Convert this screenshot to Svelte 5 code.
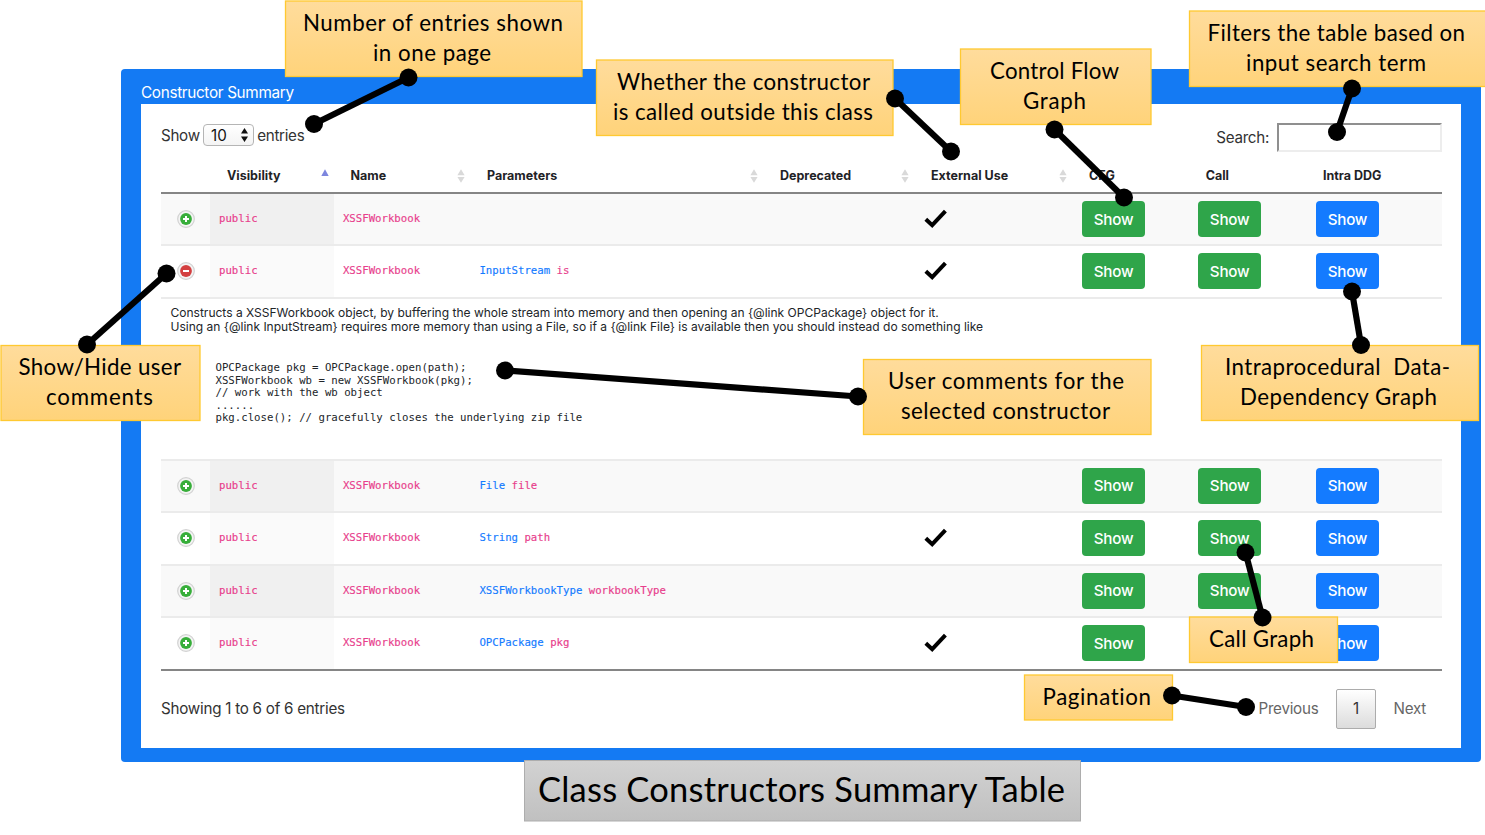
<script>
  const rows = [
    { type: '', arg: '', external: true, call: true },
    { type: 'InputStream', arg: 'is', external: true, call: true, open: true },
    { type: 'File', arg: 'file', external: false, call: true },
    { type: 'String', arg: 'path', external: true, call: true },
    { type: 'XSSFWorkbookType', arg: 'workbookType', external: false, call: true },
    { type: 'OPCPackage', arg: 'pkg', external: true, call: false }
  ];

  const headers = [
    { label: '' },
    { label: 'Visibility', sort: 'asc' },
    { label: 'Name', sort: 'both' },
    { label: 'Parameters', sort: 'both' },
    { label: 'Deprecated', sort: 'both' },
    { label: 'External Use', sort: 'both' },
    { label: 'CFG' },
    { label: 'Call' },
    { label: 'Intra DDG' }
  ];

  const sample = `OPCPackage pkg = OPCPackage.open(path);
XSSFWorkbook wb = new XSSFWorkbook(pkg);
// work with the wb object
......
pkg.close(); // gracefully closes the underlying zip file`;

  // Callout boxes: x, y, width, height; lines: text, left, baseline, width
  const notes = [
    { box: [285.5, 1, 296.5, 75.5], lines: [['Number of entries shown', 303, 31, 260], ['in one page', 373, 61, 118]] },
    { box: [596.5, 60, 296.5, 75.5], lines: [['Whether the constructor', 617, 90, 253], ['is called outside this class', 613, 120, 260]] },
    { box: [960.5, 49, 190.5, 75.5], lines: [['Control Flow', 990, 79, 129], ['Graph', 1023, 109, 63]] },
    { box: [1189.5, 11, 300, 75.5], lines: [['Filters the table based on', 1207.5, 41, 257.5], ['input search term', 1246, 71, 180]] },
    { box: [1, 345.5, 199, 75], lines: [['Show/Hide user', 18.5, 375, 162.5], ['comments', 46, 405, 107]] },
    { box: [863.5, 359.5, 287.5, 75], lines: [['User comments for the', 888, 389, 236], ['selected constructor', 901, 419, 209]] },
    { box: [1201.5, 345.5, 277, 75], lines: [['Intraprocedural\u00a0 Data-', 1225, 375, 225], ['Dependency Graph', 1240, 405, 197]] },
    { box: [1189.5, 617, 148, 45.5], lines: [['Call Graph', 1209, 647, 105]] },
    { box: [1024.5, 675, 148, 45], lines: [['Pagination', 1042.5, 705, 108.5]] }
  ];

  const links = [
    [408.5, 77.5, 314, 124],
    [895, 98.5, 951, 151.5],
    [1054.5, 129.5, 1124, 197.5],
    [1352, 88.5, 1337, 132],
    [166.5, 273.5, 87, 344.5],
    [505, 370.5, 858, 396.5],
    [1352, 291.5, 1361, 345],
    [1245.5, 552.5, 1262.5, 617.5],
    [1172, 695.5, 1246, 707]
  ];
</script>

<div class="page">
  <section class="panel">
    <h1>Constructor Summary</h1>
    <div class="body">
      <div class="toolbar">
        <div class="length">
          <span>Show</span>
          <span class="select">10
            <svg width="9" height="14" viewBox="0 0 9 14"><path d="M4.5 0 8 5.6H1zM4.5 14 1 8.4h7z" fill="#111" /></svg>
          </span>
          <span>entries</span>
        </div>
        <div class="search"><span>Search:</span><input type="text" aria-label="Search" /></div>
      </div>

      <div class="row head">
        {#each headers as h}
          <div class="th">
            <span>{h.label}</span>
            {#if h.sort}
              <svg width="8" height="14" viewBox="0 0 8 14">
                {#if h.sort === 'asc'}
                  <path d="M4 .2 7.7 7H.3z" fill="#7d86de" />
                {:else}
                  <path d="M4 .3 7.6 6.3H.4zM4 13.7.4 7.9h7.2z" fill="#d9d9d9" />
                {/if}
              </svg>
            {/if}
          </div>
        {/each}
      </div>

      {#each rows as r, i}
        <div class="row entry" class:odd={i % 2 === 0} class:first={i === 0}>
          <div class="toggle">
            <svg width="20" height="20" viewBox="0 0 20 20">
              <circle cx="10" cy="10" r="8.3" fill="#f4f4f4" stroke="#d2d2d2" stroke-width="1.2" />
              <circle cx="10" cy="10" r="5.9" fill={r.open ? '#d33f40' : '#37ae3a'} />
              <path d={r.open ? 'M7 10h6' : 'M7 10h6M10 7v6'} stroke="#fff" stroke-width="2" />
            </svg>
          </div>
          <div class="vis mono pink">public</div>
          <div class="mono pink">XSSFWorkbook</div>
          <div class="mono params"><span class="blue">{r.type}</span><span class="pink">{r.arg}</span></div>
          <div></div>
          <div class="check">
            {#if r.external}
              <svg width="24" height="20" viewBox="0 0 24 20"><path d="M1.8 10.2 8.2 16.2 21.4 2.2" fill="none" stroke="#000" stroke-width="4" /></svg>
            {/if}
          </div>
          <div class="action"><button class="green">Show</button></div>
          <div>{#if r.call}<button class="green">Show</button>{/if}</div>
          <div class="action"><button>Show</button></div>
        </div>
        {#if r.open}
          <div class="detail">
            <p>Constructs a XSSFWorkbook object, by buffering the whole stream into memory and then opening an {'{'}@link OPCPackage{'}'} object for it.</p>
            <p>Using an {'{'}@link InputStream{'}'} requires more memory than using a File, so if a {'{'}@link File{'}'} is available then you should instead do something like</p>
            <pre>{sample}</pre>
          </div>
        {/if}
      {/each}

      <div class="footer">
        <span class="info">Showing 1 to 6 of 6 entries</span>
        <div class="pager"><span>Previous</span><b>1</b><span>Next</span></div>
      </div>
    </div>
  </section>

  <svg class="notes" width="1485" height="835" viewBox="0 0 1485 835">
    <defs>
      <linearGradient id="amber" x1="0" y1="0" x2="0" y2="1">
        <stop offset="0" stop-color="#ffdc9c" /><stop offset="1" stop-color="#ffd37a" />
      </linearGradient>
      <linearGradient id="grey" x1="0" y1="0" x2="0" y2="1">
        <stop offset="0" stop-color="#d2d2d2" /><stop offset="1" stop-color="#c0c0c0" />
      </linearGradient>
    </defs>
    {#each notes as n}
      <rect x={n.box[0]} y={n.box[1]} width={n.box[2]} height={n.box[3]} fill="url(#amber)" stroke="#ffc931" stroke-width="1.3" />
      {#each n.lines as [label, x, y, w]}
        <text {x} {y} textLength={w}>{label}</text>
      {/each}
    {/each}
    {#each links as [x1, y1, x2, y2]}
      <line {x1} {y1} {x2} {y2} stroke="#000" stroke-width="6.2" />
      <circle cx={x1} cy={y1} r="9" />
      <circle cx={x2} cy={y2} r="9" />
    {/each}
    <rect x="524.5" y="760.5" width="556" height="60.5" fill="url(#grey)" stroke="#adadad" />
    <text class="title" x="538" y="802" textLength="527">Class Constructors Summary Table</text>
  </svg>
</div>

<style>
  :global(body) { background: #fff; }
  .page {
    position: relative;
    width: 1485px;
    height: 835px;
    overflow: hidden;
    box-sizing: border-box;
    padding: 68.5px 0 0 121px;
    font-family: Inter, "Liberation Sans", sans-serif;
    color: #333;
  }
  .page * { box-sizing: border-box; }
  .panel {
    width: 1360px;
    height: 693px;
    padding: 0 20px;
    border-radius: 4px;
    background: #147af3;
  }
  h1 {
    margin: 0;
    height: 35.5px;
    padding-top: 14px;
    font-size: 15.3px;
    line-height: 20px;
    font-weight: 400;
    color: #fff;
    letter-spacing: -0.33px;
  }
  .body { height: 644px; padding: 0 19px 0 20px; background: #fff; }
  .toolbar { display: flex; justify-content: space-between; height: 55px; font-size: 15.2px; letter-spacing: -0.3px; }
  .length { display: flex; align-items: center; gap: 3.2px; height: 22px; margin-top: 20px; }
  .select {
    display: flex;
    align-items: center;
    justify-content: space-between;
    width: 51px;
    height: 22px;
    padding: 0 4px 0 7px;
    border: 1px solid #b5b5b5;
    border-radius: 4px;
    background: linear-gradient(#fff, #f4f4f4);
    color: #111;
    letter-spacing: 0;
  }
  .search { display: flex; align-items: center; gap: 8px; height: 29px; margin-top: 19px; }
  input { width: 165px; height: 29px; border: 2px solid; border-color: #8f8f8f #ededed #ededed #8f8f8f; background: #fff; }
  .row { display: grid; grid-template-columns: 49px 123.5px 136.5px 293px 151px 158px 116.7px 117.3px 136px; }
  .head { height: 35px; border-bottom: 2px solid #858585; }
  .th {
    display: flex;
    align-items: center;
    justify-content: space-between;
    padding: 0 5px 0 17px;
    font-size: 12.5px;
    font-weight: 700;
    color: #1f2327;
    white-space: nowrap;
  }
  .entry { height: 52.5px; border-top: 2px solid #ebebeb; }
  .entry.first { height: 50.2px; border-top: 0; }
  .entry > div { display: flex; align-items: center; padding-left: 9.4px; }
  .entry > .check, .entry > .action { padding-left: 10px; }
  .entry.odd { background: #f9f9f9; }
  .entry .vis { background: #fafafa; padding-left: 9px; }
  .entry.odd .vis { background: #f0f0f0; }
  .entry > .toggle { padding-left: 15px; padding-bottom: 0.5px; }
  .mono, pre { font-family: "DejaVu Sans Mono", monospace; font-size: 10.7px; white-space: pre; }
  .entry > .mono { padding-bottom: 1.6px; }
  .params { gap: 6.4px; }
  .pink { color: #e83e8c; }
  .blue { color: #147bff; }
  .mono { -webkit-text-stroke: 0.15px currentColor; }
  button {
    width: 63px;
    height: 36px;
    padding: 0;
    border: 0;
    border-radius: 4px;
    background: #147bff;
    color: #fff;
    font: 500 15.2px Inter, sans-serif;
    letter-spacing: -0.25px;
  }
  button.green { background: #2fa54a; }
  .detail { height: 162px; padding: 7.5px 10px 0 9.5px; border-top: 2px solid #ebebeb; font-size: 12.03px; line-height: 14.3px; color: #212529; }
  .detail p { margin: 0; white-space: nowrap; }
  pre { margin: 27.5px 0 0 45px; line-height: 12.5px; color: #212529; }
  .footer { display: flex; justify-content: space-between; border-top: 2px solid #858585; font-size: 15.2px; letter-spacing: -0.25px; }
  .info { margin-top: 28px; line-height: 20px; }
  .pager { display: flex; align-items: center; height: 40px; margin: 18px 16px 0 0; color: #666; }
  .pager b {
    width: 40px;
    height: 40px;
    margin: 0 17.5px;
    border: 1px solid #acacac;
    border-radius: 2px;
    background: linear-gradient(#fff, #dcdcdc);
    color: #333;
    font-weight: 400;
    line-height: 38px;
    text-align: center;
  }
  .notes {
    position: absolute;
    left: 0;
    top: 0;
    font-family: Lato, sans-serif;
    font-size: 22.3px;
    font-variant-ligatures: none;
  }
  .notes .title { font-size: 34.5px; }
</style>
